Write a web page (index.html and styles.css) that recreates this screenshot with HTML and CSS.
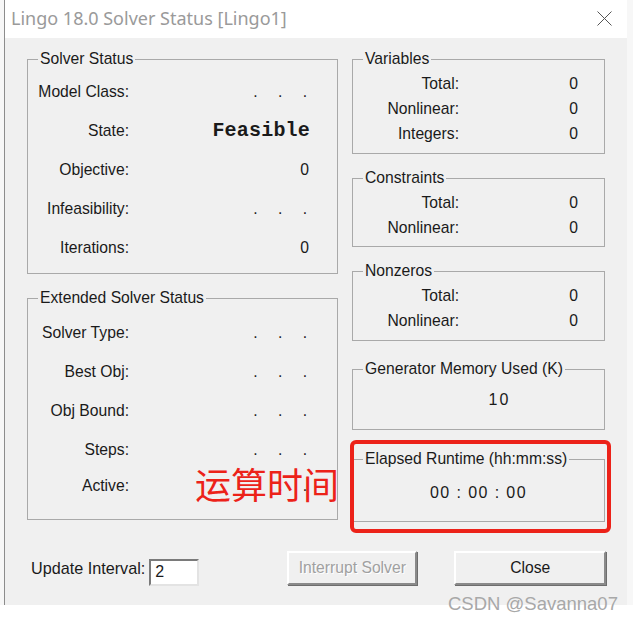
FILE: index.html
```html
<!DOCTYPE html>
<html lang="en">
  <head>
    <meta charset="UTF-8" />
    <title>Lingo 18.0 Solver Status [Lingo1]</title>
    <link rel="stylesheet" href="styles.css">
  </head>
  <body>
    <div class="window">
      <div class="titlebar">
        <span class="title">Lingo 18.0 Solver Status [Lingo1]</span>
        <svg class="close-icon" width="15" height="15" viewBox="0 0 15 15">
          <path d="M0.5 0.5 L14.5 14.5 M14.5 0.5 L0.5 14.5" stroke="#555" stroke-width="1" fill="none" />
        </svg>
      </div>

      <div class="client">
        <div class="panels">
          <div class="col col-left">
            <fieldset class="group group-solver">
              <legend>Solver Status</legend>
              <div class="rows rows-big">
                <div class="row"><span class="label">Model Class:</span><span class="value dots">. . .</span></div>
                <div class="row"><span class="label">State:</span><span class="value mono">Feasible</span></div>
                <div class="row"><span class="label">Objective:</span><span class="value">0</span></div>
                <div class="row"><span class="label">Infeasibility:</span><span class="value dots">. . .</span></div>
                <div class="row"><span class="label">Iterations:</span><span class="value">0</span></div>
              </div>
            </fieldset>

            <fieldset class="group group-extended">
              <legend>Extended Solver Status</legend>
              <div class="rows rows-big">
                <div class="row"><span class="label">Solver Type:</span><span class="value dots">. . .</span></div>
                <div class="row"><span class="label">Best Obj:</span><span class="value dots">. . .</span></div>
                <div class="row"><span class="label">Obj Bound:</span><span class="value dots">. . .</span></div>
                <div class="row"><span class="label">Steps:</span><span class="value dots">. . .</span></div>
                <div class="row row-tight"><span class="label">Active:</span><span class="value dots">. . .</span></div>
              </div>
            </fieldset>
          </div>

          <div class="col col-right">
            <fieldset class="group group-vars">
              <legend>Variables</legend>
              <div class="rows rows-small">
                <div class="row"><span class="label">Total:</span><span class="value">0</span></div>
                <div class="row"><span class="label">Nonlinear:</span><span class="value">0</span></div>
                <div class="row"><span class="label">Integers:</span><span class="value">0</span></div>
              </div>
            </fieldset>

            <fieldset class="group group-cons">
              <legend>Constraints</legend>
              <div class="rows rows-small">
                <div class="row"><span class="label">Total:</span><span class="value">0</span></div>
                <div class="row"><span class="label">Nonlinear:</span><span class="value">0</span></div>
              </div>
            </fieldset>

            <fieldset class="group group-nonzeros">
              <legend>Nonzeros</legend>
              <div class="rows rows-small">
                <div class="row"><span class="label">Total:</span><span class="value">0</span></div>
                <div class="row"><span class="label">Nonlinear:</span><span class="value">0</span></div>
              </div>
            </fieldset>

            <fieldset class="group group-memory">
              <legend>Generator Memory Used (K)</legend>
              <div class="single memory-value">10</div>
            </fieldset>

            <fieldset class="group group-runtime">
              <legend>Elapsed Runtime (hh:mm:ss)</legend>
              <div class="single runtime-value">00 : 00 : 00</div>
            </fieldset>
          </div>
        </div>

        <div class="footer">
          <label class="interval-label" for="interval">Update Interval:</label>
          <input class="interval-input" id="interval" type="text" value="2" />
          <button class="btn btn-interrupt" disabled>Interrupt Solver</button>
          <button class="btn btn-close">Close</button>
        </div>

        <!-- annotations drawn over the dialog -->
        <div class="highlight"></div>
        <div class="note">运算时间</div>
      </div>
    </div>
    <div class="below"></div>
    <div class="watermark">CSDN @Savanna07</div>
  </body>
</html>
```

FILE: styles.css
```css
:root {
  --face: #f0f0f0;
  --text: #1a1a1a;
  --line: #a9a9a9;
  --muted: #a0a0a0;
  --red: #ec2219;
}

* {
  box-sizing: border-box;
}

html,
body {
  height: 100%;
}

body {
  position: relative;
  margin: 0;
  min-height: 621px;
  background-color: #f7f7f7;
  font-family: "Liberation Sans", Arial, sans-serif;
  color: var(--text);
}

.window {
  margin-left: 5px;
  width: 622px;
  height: 605px;
  display: flex;
  flex-direction: column;
  background-color: var(--face);
  box-shadow: -1px 0 0 #8c8c8c;
}

.below {
  height: 16px;
  background-color: #ffffff;
}

.titlebar {
  height: 38px;
  flex-shrink: 0;
  display: flex;
  align-items: center;
  justify-content: space-between;
  padding: 0 15px 2px 6px;
  background-color: #ffffff;
}

.title {
  font-family: "Noto Sans", "Open Sans", sans-serif;
  font-size: 18px;
  color: #9a9a9a;
}

.close-icon {
  display: block;
}

.client {
  position: relative;
  flex: 1;
  padding: 12px 0 0 22px;
}

.panels {
  display: flex;
  gap: 14px;
}

.col {
  display: flex;
  flex-direction: column;
}

.col-left {
  width: 311px;
  gap: 15px;
}

.col-right {
  width: 253px;
}

.group {
  margin: 0;
  padding: 0;
  border: 1px solid var(--line);
  min-width: 0;
}

.group legend {
  margin-left: 10px;
  padding: 0 2px;
  font-size: 15.7px;
  line-height: 18px;
}

.group-solver { height: 224px; }
.group-extended { height: 231px; }
.group-vars { height: 104px; }
.group-cons { height: 78px; margin-top: 15px; }
.group-nonzeros { height: 79px; margin-top: 15px; }
.group-memory { height: 70px; margin-top: 19px; }
.group-runtime { height: 72px; margin-top: 20px; }

.rows {
  display: flex;
  flex-direction: column;
}

.row {
  display: grid;
  align-items: center;
  font-size: 15.7px;
}

.rows-big {
  padding-top: 4px;
}

.rows-big .row {
  grid-template-columns: 101px 1fr;
  height: 39px;
  padding-right: 28px;
}

.group-extended .rows-big {
  padding-top: 6px;
}

.row-tight {
  margin-top: -3px;
}

.rows-small {
  padding-top: 3px;
}

.rows-small .row {
  grid-template-columns: 106px 1fr;
  height: 25px;
  padding-right: 26px;
}

.label {
  text-align: right;
}

.value {
  text-align: right;
}

.dots {
  word-spacing: 16px;
  padding-right: 2px;
}

.mono {
  font-family: "Liberation Mono", "Courier New", monospace;
  font-size: 20px;
  font-weight: bold;
  letter-spacing: 0.2px;
  margin-right: -1px;
}

.single {
  font-size: 16px;
  line-height: 24px;
  text-align: center;
}

.memory-value {
  padding-top: 10px;
  padding-left: 42px;
  letter-spacing: 2px;
}

.runtime-value {
  padding-top: 13px;
  letter-spacing: 1.4px;
}

.footer {
  display: flex;
  align-items: center;
  margin-top: 29px;
  padding-left: 4px;
  height: 34px;
}

.interval-label {
  font-size: 16.2px;
  margin-right: 4px;
}

.interval-input {
  width: 50px;
  height: 27px;
  margin-top: 8px;
  padding: 0 4px;
  font-family: inherit;
  font-size: 16px;
  color: var(--text);
  background-color: #ffffff;
  border: 2px solid;
  border-color: #7a7a7a #e3e3e3 #e3e3e3 #7a7a7a;
  outline: none;
}

.btn {
  height: 34px;
  font-family: inherit;
  font-size: 15.7px;
  background-color: var(--face);
  border: 2px solid;
  border-color: #ffffff #8a8a8a #8a8a8a #ffffff;
  box-shadow: 1px 1px 0 #6d6d6d;
  padding: 0;
}

.btn-interrupt {
  width: 130px;
  margin-left: 88px;
  color: var(--muted);
  text-shadow: 1px 1px 0 #ffffff;
}

.btn-close {
  width: 152px;
  margin-left: 37px;
  color: var(--text);
}

.highlight {
  position: absolute;
  left: 345px;
  top: 402px;
  width: 261px;
  height: 93px;
  border: 4px solid var(--red);
  border-radius: 6px;
}

.note {
  position: absolute;
  left: 190px;
  top: 425px;
  font-family: "Noto Sans CJK SC", sans-serif;
  font-size: 36px;
  line-height: 40px;
  color: var(--red);
}

.watermark {
  position: absolute;
  left: 448px;
  top: 593px;
  font-family: "Liberation Sans", Arial, sans-serif;
  font-size: 18.5px;
  color: #a8a8a8;
  white-space: nowrap;
}
```
